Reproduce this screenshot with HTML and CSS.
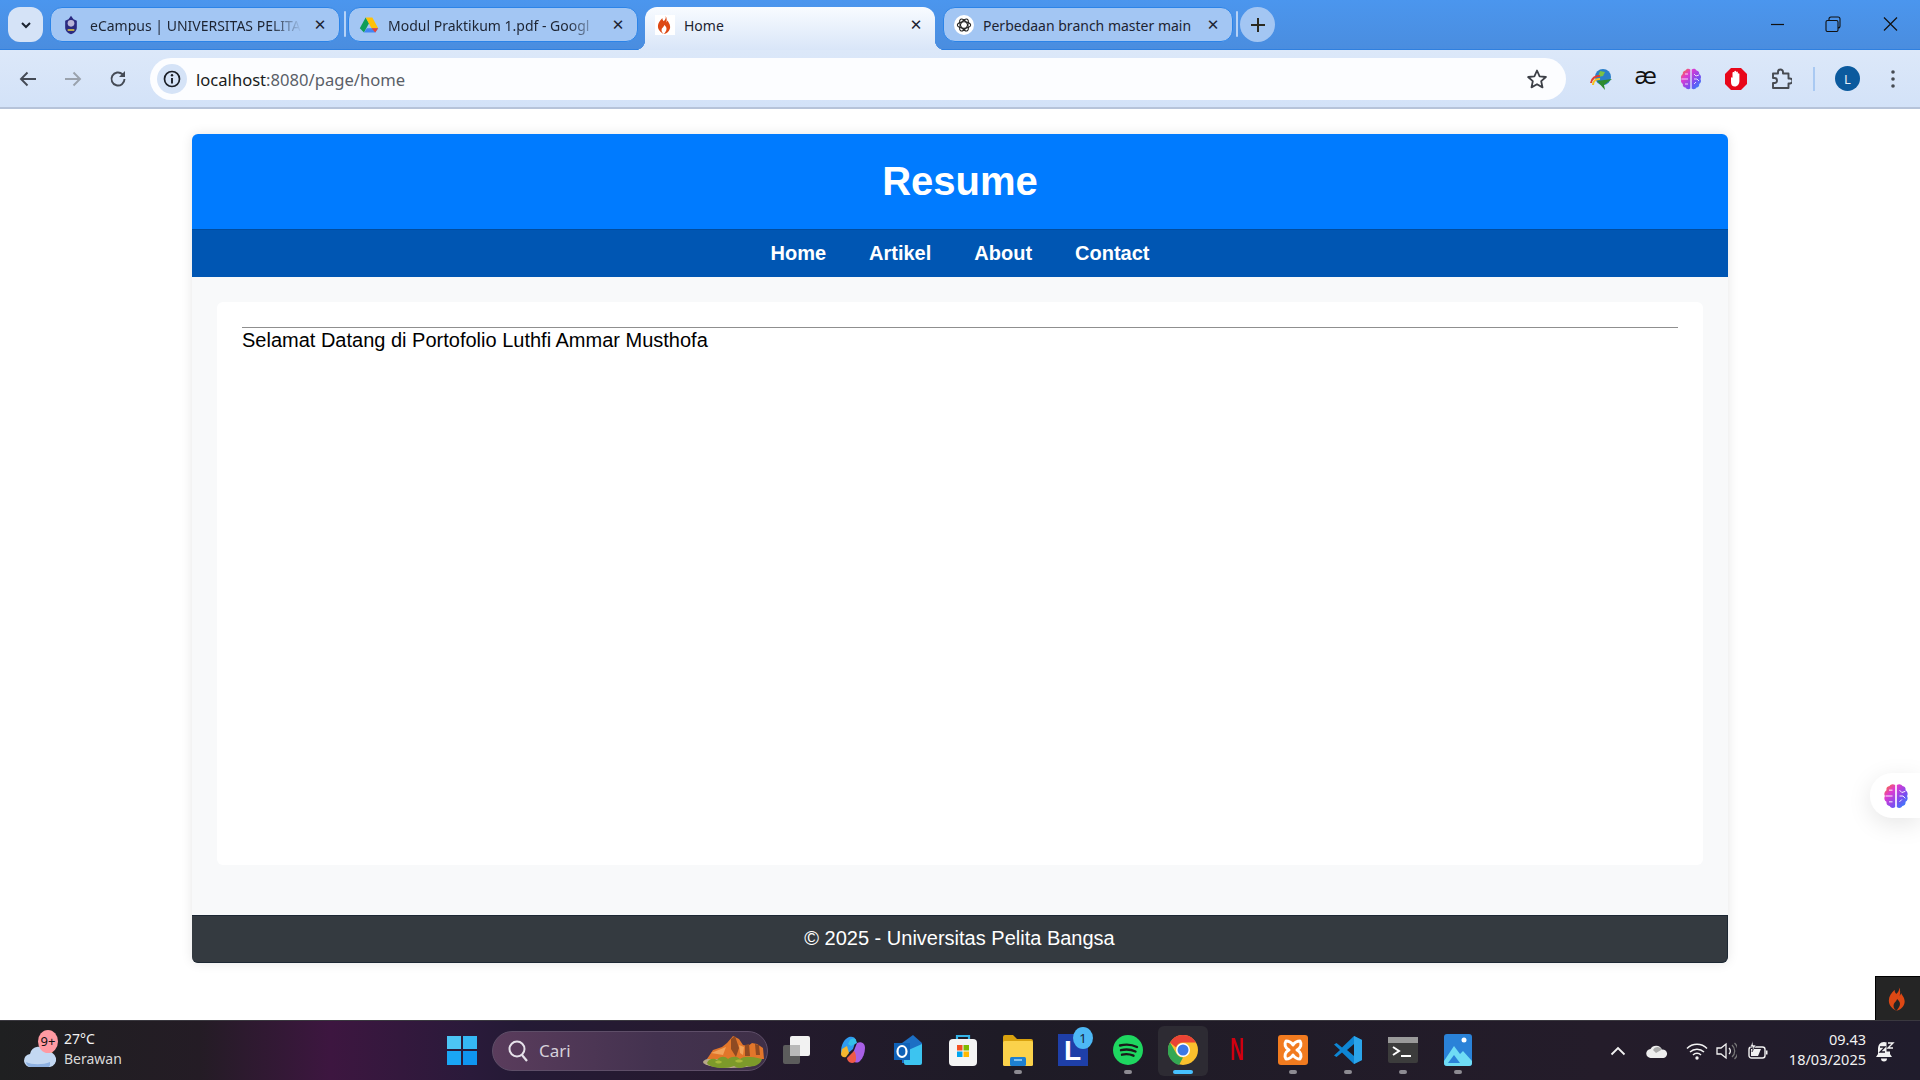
FILE: index.html
```html
<!DOCTYPE html>
<html>

<head>
    <title>Home</title>
    <link rel="stylesheet" href="styles.css">
</head>

<body>
    <svg class="defs" width="0" height="0">
        <defs>
            <linearGradient id="brainGrad" x1="0" y1="0" x2="1" y2="1">
                <stop offset="0" stop-color="#ff7a18" />
                <stop offset="0.3" stop-color="#e03ad0" />
                <stop offset="0.65" stop-color="#7a4df0" />
                <stop offset="1" stop-color="#1e90ff" />
            </linearGradient>
            <symbol id="flame" viewBox="0 0 24 28">
                <path fill="#dd4814" d="M13 0c1 4-1 6-3 8C8 6 8 5 8 3 4 7 1 11 1 16c0 6 5 10 9 12-3-2-4-5-3-8 1-2 3-3 4-6 3 3 4 5 3 8-1 2-2 4-4 6 6-1 10-6 10-11 0-5-3-7-4-10-1 1-1 2-2 3 1-3 1-7-1-10z" />
            </symbol>
            <symbol id="brain" viewBox="0 0 24 24">
                <path fill="url(#brainGrad)" d="M11.300 2.500C9.500 1.300 7.300 1.800 6.500 3.500 4.500 3.700 3.500 5.200 3.800 7 2 8.200 1.500 10.200 2.500 12 1.500 13.800 2 16 3.800 17 3.500 19 4.700 20.500 6.500 20.600 7.500 22.400 9.700 22.800 11.300 21.500zM12.700 2.500C14.500 1.300 16.700 1.800 17.500 3.500 19.500 3.700 20.500 5.200 20.200 7 22 8.200 22.500 10.200 21.500 12 22.500 13.800 22 16 20.200 17 20.500 19 19.300 20.500 17.500 20.600 16.500 22.400 14.300 22.800 12.700 21.500z" />
                <path fill="none" stroke="#fff" stroke-width="0.8" d="M3 12h6M6 7h3M6 17h3M15 7l2 2 3-1M15 12h3l2 2M15 17l2-2" />
            </symbol>
        </defs>
    </svg>

    <div class="tabstrip">
        <div class="tab-list">
            <svg width="14" height="14" viewBox="0 0 14 14"><path d="M3 5l4 4 4-4" fill="none" stroke="#1b2330" stroke-width="2" /></svg>
        </div>
        <div class="tab">
            <svg class="favicon" viewBox="0 0 20 24">
                <path fill="#2b2a80" d="M10 1l3 4 4 2v8c0 4-3 7-7 8-4-1-7-4-7-8V7l4-2z" />
                <circle cx="10" cy="10" r="4" fill="#b9b4d8" />
                <path fill="#d8c24a" d="M6 17h8v2H6z" />
            </svg>
            <span class="tab-title">eCampus | UNIVERSITAS PELITA</span>
            <span class="tab-close">&#10005;</span>
        </div>
        <div class="tab-sep"></div>
        <div class="tab">
            <svg class="favicon" viewBox="0 0 24 22">
                <path fill="#0f9d58" d="M1 15L8 2l4 7-6 11z" />
                <path fill="#ffc107" d="M8 2h8l7 13h-8z" />
                <path fill="#4285f4" d="M6 20l3.500-5H23l-3.500 5z" />
                <path fill="#ea4335" d="M15 15h8l-3.500 5z" />
            </svg>
            <span class="tab-title">Modul Praktikum 1.pdf - Googl</span>
            <span class="tab-close">&#10005;</span>
        </div>
        <div class="tab tab-active">
            <svg class="favicon favicon-white" viewBox="0 0 24 28"><use href="#flame" /></svg>
            <span class="tab-title">Home</span>
            <span class="tab-close">&#10005;</span>
        </div>
        <div class="tab tab-last">
            <svg class="favicon" viewBox="0 0 24 24">
                <circle cx="12" cy="12" r="12" fill="#fff" />
                <g fill="none" stroke="#222" stroke-width="1.300">
                    <ellipse cx="12" cy="12" rx="8" ry="4" />
                    <ellipse cx="12" cy="12" rx="8" ry="4" transform="rotate(60 12 12)" />
                    <ellipse cx="12" cy="12" rx="8" ry="4" transform="rotate(120 12 12)" />
                </g>
            </svg>
            <span class="tab-title">Perbedaan branch master main</span>
            <span class="tab-close">&#10005;</span>
        </div>
        <div class="tab-sep tab-sep-last"></div>
        <div class="new-tab">
            <svg width="16" height="16" viewBox="0 0 16 16"><path d="M8 1v14M1 8h14" stroke="#2b2a20" stroke-width="2" /></svg>
        </div>
        <div class="window-controls">
            <svg width="56" height="16" viewBox="0 0 56 16"><path d="M20 8.500h13" stroke="#111" stroke-width="1.200" /></svg>
            <svg width="56" height="16" viewBox="0 0 56 16"><path transform="translate(-2.500 0)" d="M23 4.500h9a1.500 1.500 0 0 1 1.500 1.500v8a1.500 1.500 0 0 1-1.500 1.500h-9a1.500 1.500 0 0 1-1.500-1.500V6a1.500 1.500 0 0 1 1.500-1.500zM24.500 4V3a2 2 0 0 1 2-2h7a2 2 0 0 1 2 2v7a2 2 0 0 1-2 2" fill="none" stroke="#111" stroke-width="1.100" /></svg>
            <svg width="56" height="16" viewBox="0 0 56 16"><path d="M21 1.500l13 13M34 1.500l-13 13" stroke="#111" stroke-width="1.200" /></svg>
        </div>
    </div>

    <div class="toolbar">
        <div class="tool-btn">
            <svg width="20" height="20" viewBox="0 0 20 20"><path d="M18 10H3M9.500 3.500L3 10l6.500 6.500" fill="none" stroke="#444a55" stroke-width="1.900" /></svg>
        </div>
        <div class="tool-btn">
            <svg width="20" height="20" viewBox="0 0 20 20"><path d="M2 10h15M10.500 3.500L17 10l-6.500 6.500" fill="none" stroke="#9aa2ad" stroke-width="1.900" /></svg>
        </div>
        <div class="tool-btn">
            <svg width="20" height="20" viewBox="0 0 20 20"><path d="M16.500 10a6.500 6.500 0 1 1-2-4.700L16.500 7" fill="none" stroke="#444a55" stroke-width="1.900" /><path d="M17 2v6h-6z" fill="#444a55" /></svg>
        </div>
        <div class="address">
            <div class="site-info">
                <svg width="18" height="18" viewBox="0 0 18 18"><circle cx="9" cy="9" r="7.500" fill="none" stroke="#1b1f27" stroke-width="1.700" /><path d="M9 8v5.500" stroke="#1b1f27" stroke-width="1.900" /><circle cx="9" cy="5.300" r="1.200" fill="#1b1f27" /></svg>
            </div>
            <span class="url"><span class="url-host">localhost</span>:8080/page/home</span>
            <svg class="star" width="22" height="22" viewBox="0 0 22 22"><path d="M11 2.500l2.600 5.800 6.300.7-4.700 4.200 1.300 6.200L11 16.200l-5.500 3.200 1.300-6.200L2.100 9l6.300-.7z" fill="none" stroke="#3d4047" stroke-width="1.800" stroke-linejoin="round" /></svg>
        </div>
        <div class="extensions">
            <div class="tool-btn">
                <svg width="24" height="24" viewBox="0 0 24 24">
                    <circle cx="14" cy="10" r="8" fill="#2a7fc9" />
                    <path fill="#7bc144" d="M11 4l5 1-2 4-5 1z" />
                    <path fill="none" stroke="#e23c2e" stroke-width="2" d="M2 16a8 8 0 0 1 9-7" />
                    <path fill="none" stroke="#f6c21c" stroke-width="2" d="M4 18a6 6 0 0 1 7-6" />
                    <path fill="#2e8b2e" d="M8 14l15-2-8 6 1 5z" />
                </svg>
            </div>
            <div class="tool-btn"><span class="ae-icon">æ</span></div>
            <div class="tool-btn"><svg width="24" height="24"><use href="#brain" /></svg></div>
            <div class="tool-btn">
                <svg width="24" height="24" viewBox="0 0 24 24">
                    <path fill="#e8071a" d="M7 1h10l6 6v10l-6 6H7l-6-6V7z" />
                    <path fill="#fff" d="M7 11c0-1 1.500-1 1.500 0V6c0-1.300 1.800-1.300 1.800 0V4.600c0-1.200 1.800-1.200 1.800 0V5.500c0-1.200 1.800-1.200 1.800 0v1.500c0-1 1.500-1 1.500 0v7c0 3-2 5.500-4.500 5.500S7 18 7 15z" />
                </svg>
            </div>
            <div class="tool-btn">
                <svg width="22" height="22" viewBox="0 0 22 22"><path d="M3 5.500h5V4a2.500 2.500 0 0 1 5 0v1.500h5.500v5H20a2.500 2.500 0 0 1 0 5h-1.500V20H3v-5h1.500a2.500 2.500 0 0 0 0-5H3z" fill="none" stroke="#474b52" stroke-width="1.900" stroke-linejoin="round" /></svg>
            </div>
        </div>
        <div class="tool-sep"></div>
        <div class="tool-btn">
            <div class="avatar">L</div>
        </div>
        <div class="tool-btn">
            <svg width="6" height="20" viewBox="0 0 6 20"><circle cx="3" cy="3" r="1.800" fill="#454a52" /><circle cx="3" cy="10" r="1.800" fill="#454a52" /><circle cx="3" cy="17" r="1.800" fill="#454a52" /></svg>
        </div>
    </div>

    <div class="page">
        <div class="container">
            <header class="site-header">
                <h1>Resume</h1>
            </header>
            <nav class="site-nav">
                <a href="#">Home</a>
                <a href="#">Artikel</a>
                <a href="#">About</a>
                <a href="#">Contact</a>
            </nav>
            <section class="content">
                <div class="card">
                    <hr>
                    <p>Selamat Datang di Portofolio Luthfi Ammar Musthofa</p>
                </div>
            </section>
            <footer class="site-footer">&copy; 2025 - Universitas Pelita Bangsa</footer>
        </div>

        <div class="brain-pill"><svg width="28" height="28"><use href="#brain" /></svg></div>
        <div class="ci-toolbar"><svg width="20" height="24"><use href="#flame" /></svg></div>
    </div>

    <div class="taskbar">
        <div class="weather">
            <div class="weather-icon">
                <svg width="36" height="30" viewBox="0 0 36 30">
                    <circle cx="24" cy="9" r="6" fill="#f08a24" />
                    <path fill="#c3d8f2" d="M8 26a6.500 6.500 0 0 1-1-13 9 9 0 0 1 17-2 7.500 7.500 0 0 1 3 15z" />
                    <path fill="#8fb2e2" d="M3 21c6 3 17 3 24 0a6 6 0 0 1-1 5H8a6 6 0 0 1-5-5z" />
                </svg>
                <span class="weather-badge">9+</span>
            </div>
            <div class="weather-text">
                <span class="weather-temp">27°C</span>
                <span class="weather-desc">Berawan</span>
            </div>
        </div>

        <div class="task-icon">
            <svg width="30" height="30" viewBox="0 0 30 30">
                <path fill="#4cc5f5" d="M0 1h14v13H0z" />
                <path fill="#35b8f5" d="M16 1h14v13H16z" />
                <path fill="#1aa6f5" d="M0 16h14v14H0z" />
                <path fill="#0f95f0" d="M16 16h14v14H16z" />
            </svg>
        </div>
        <div class="search">
            <svg width="22" height="24" viewBox="0 0 22 24"><circle cx="10" cy="10" r="7.500" fill="none" stroke="#e6e2ea" stroke-width="2" /><path d="M15 16l5 6" stroke="#e6e2ea" stroke-width="2.200" /></svg>
            <span class="search-text">Cari</span>
            <svg class="search-art" width="64" height="36" viewBox="0 0 64 36">
                <ellipse cx="30" cy="29" rx="28" ry="6" fill="#b8a888" />
                <path fill="#e2762a" d="M6 26l6-9 9-3 5-4 6-7 6 3 4 6 5 1 4-3 5 1 6 4 1 11z" />
                <path fill="#8f4a22" d="M30 6l4-3 4 12-3 9-5-8zM44 12l4-1 1 12h-5zM54 11l4 1 1 10h-4z" />
                <path fill="#f2a35a" d="M10 20l10-4 5-2-3 8zM38 12l5 2-1 8-3-2z" />
                <path fill="#7d9a2a" d="M6 30c2-5 7-5 10-3 3-4 8-4 11-1 4-3 9-3 12 0 4-3 10-3 22 0-1 5-8 9-15 7-4 2-9 3-13 0-6 3-24 3-27-3z" />
                <path fill="#a8b83a" d="M14 29c2-2 5-2 7 0-2 2-5 2-7 0zM34 28c2-2 6-2 8 0-2 2-6 2-8 0z" />
            </svg>
        </div>

        <div class="task-icon">
            <svg width="32" height="32" viewBox="0 0 32 32">
                <rect x="1" y="11" width="17" height="19" rx="2" fill="#5c5c5c" />
                <rect x="8" y="2" width="20" height="20" rx="2" fill="#f2f2f2" />
                <rect x="8" y="11" width="10" height="11" fill="#b9b9b9" />
            </svg>
        </div>
        <div class="task-icon">
            <svg width="30" height="30" viewBox="0 0 30 30">
                <path fill="#2f9bf0" d="M11 2c3-1 6 0 7 3L15 14l-7 6c-2 2-5 0-5-3 0-7 3-13 8-15z" />
                <path fill="#f5b52e" d="M4 14l5-3 2 7-3 4c-3 1-5-1-5-3z" />
                <path fill="#a860e6" d="M19 8c4-2 8 0 8 5 0 5-2 10-5 13-2 2-5 2-6 0l-1-8z" />
                <path fill="#ef5a48" d="M9 23l7-7c2 2 2 6 2 8 0 3-2 4-4 4-3 0-5-3-5-5z" />
                <path fill="#35c0e8" d="M12 5c2-2 5-2 6 0l1 3-6 3-3-2z" />
            </svg>
        </div>
        <div class="task-icon">
            <svg width="30" height="32" viewBox="0 0 30 32">
                <path fill="#1c6fc4" d="M9 9l11-8 9 8v20H9z" />
                <path fill="#3cc4f0" d="M11 18l18-8v19a2 2 0 0 1-2 2H13a2 2 0 0 1-2-2z" />
                <rect x="1" y="9" width="16" height="17" fill="#0f62b8" />
                <ellipse cx="9" cy="17.500" rx="4.500" ry="5.500" fill="none" stroke="#fff" stroke-width="2.200" />
            </svg>
        </div>
        <div class="task-icon">
            <svg width="30" height="34" viewBox="0 0 30 34">
                <path d="M9 8V3h12v5" fill="none" stroke="#35b4e8" stroke-width="2.200" />
                <rect x="1" y="6" width="28" height="27" rx="4" fill="#f4f4f4" />
                <path fill="#f25022" d="M9 12h5.500v5.500H9z" />
                <path fill="#7fba00" d="M15.500 12H21v5.500h-5.500z" />
                <path fill="#00a4ef" d="M9 18.500h5.500V24H9z" />
                <path fill="#ffb900" d="M15.500 18.500H21V24h-5.500z" />
            </svg>
        </div>
        <div class="task-icon">
            <svg width="30" height="32" viewBox="0 0 30 32">
                <path fill="#d9a20e" d="M0 3a2 2 0 0 1 2-2h8l4 4h14a2 2 0 0 1 2 2v4H0z" />
                <rect y="7" width="30" height="25" rx="1.500" fill="#fbd24b" />
                <rect x="7" y="23" width="16" height="9" rx="1.500" fill="#1d7fd0" />
                <path d="M11 26h8" stroke="#a6d8f8" stroke-width="1.500" />
            </svg>
            <span class="running"></span>
        </div>
        <div class="task-icon">
            <div class="app-l">L</div>
            <span class="app-l-badge">1</span>
        </div>
        <div class="task-icon">
            <svg width="30" height="30" viewBox="0 0 30 30">
                <circle cx="15" cy="15" r="15" fill="#1ed760" />
                <path d="M7 10.500c6-1.500 12-1 17 1.500M8 15.200c5-1.200 10-.8 14.500 1.300M9 19.700c4-1 8-.6 11.500 1" fill="none" stroke="#1a1a1a" stroke-width="2.400" stroke-linecap="round" />
            </svg>
            <span class="running"></span>
        </div>
        <div class="task-icon task-icon-active">
            <svg width="30" height="30" viewBox="0 0 30 30">
                <circle cx="15" cy="15" r="15" fill="#fbc02d" />
                <path fill="#ea4335" d="M2 7.500A15 15 0 0 1 28 7.500H15a7.500 7.500 0 0 0-7 5z" />
                <path fill="#34a853" d="M2 7.500l6.500 11.300a7.500 7.500 0 0 0 6.500 3.700L11 30A15 15 0 0 1 2 7.500z" />
                <circle cx="15" cy="15" r="7" fill="#fff" />
                <circle cx="15" cy="15" r="5.500" fill="#3b78e7" />
            </svg>
            <span class="running running-active"></span>
        </div>
        <div class="task-icon">
            <span class="netflix">N</span>
        </div>
        <div class="task-icon">
            <svg width="30" height="30" viewBox="0 0 30 30">
                <rect width="30" height="30" rx="3" fill="#f27b1f" />
                <path fill="none" stroke="#fff" stroke-width="3" stroke-linejoin="round" d="M8 6c3 0 5 1 7 4 2-3 4-4 7-4 2 3 1 7-3 9 4 2 5 6 3 9-3 0-5-1-7-4-2 3-4 4-7 4-2-3-1-7 3-9-4-2-5-6-3-9z" />
            </svg>
            <span class="running"></span>
        </div>
        <div class="task-icon">
            <svg width="30" height="30" viewBox="0 0 30 30">
                <path fill="#0e86d4" d="M21 1l8 4v20l-8 4-12-11.500L3.500 22 1 20.500 7 15 1 9.500 3.500 8 9 12.500z" />
                <path fill="#2ba5ea" d="M21 1l8 4v20l-8 4z" />
                <path fill="#1e1a24" d="M21 9l-7 6 7 6z" />
            </svg>
            <span class="running"></span>
        </div>
        <div class="task-icon">
            <svg width="30" height="26" viewBox="0 0 30 26">
                <rect width="30" height="26" rx="2" fill="#3c3c3c" />
                <rect width="30" height="6" fill="#9a9a9a" />
                <path d="M5 10l6 4-6 4" fill="none" stroke="#fff" stroke-width="2" />
                <path d="M13 19h10" stroke="#fff" stroke-width="2" />
            </svg>
            <span class="running"></span>
        </div>
        <div class="task-icon">
            <svg width="28" height="32" viewBox="0 0 28 32">
                <rect width="28" height="32" rx="3" fill="#2a82d8" />
                <circle cx="20" cy="6" r="2.500" fill="#fff" />
                <path fill="#6fdcf5" d="M0 27l10-15 6 8 3-3 9 10v2a3 3 0 0 1-3 3H3a3 3 0 0 1-3-3z" />
                <path fill="#2a82d8" d="M4 29l6-8 6 8z" />
            </svg>
            <span class="running"></span>
        </div>

        <div class="tray">
            <svg class="tray-chevron" width="16" height="10" viewBox="0 0 16 10"><path d="M1.500 8.500L8 2l6.500 6.500" fill="none" stroke="#f2f2f2" stroke-width="1.800" /></svg>
            <svg class="tray-cloud" width="22" height="14" viewBox="0 0 22 14"><path fill="#eeeeee" d="M5 14a4.500 4.500 0 0 1-.5-9A6.500 6.500 0 0 1 16 5.500 4.300 4.300 0 0 1 17.500 14z" /><path fill="#a9a9a9" d="M7 6a5 5 0 0 1 9-.5L10 9z" /></svg>
            <svg class="tray-wifi" width="22" height="18" viewBox="0 0 22 18"><path d="M1 6.500a14 14 0 0 1 20 0M4 10a10 10 0 0 1 14 0M7 13a5.500 5.500 0 0 1 8 0" fill="none" stroke="#f2f2f2" stroke-width="1.500" /><circle cx="11" cy="16" r="1.700" fill="#f2f2f2" /></svg>
            <svg class="tray-volume" width="21" height="18" viewBox="0 0 21 18"><path d="M1 6h4l5-4v14l-5-4H1z" fill="none" stroke="#f2f2f2" stroke-width="1.300" /><path d="M13 6a4 4 0 0 1 0 6" fill="none" stroke="#f2f2f2" stroke-width="1.300" /><path d="M16 3a8 8 0 0 1 0 12M18.500 1a11 11 0 0 1 0 16" fill="none" stroke="#777" stroke-width="1.300" /></svg>
            <svg class="tray-battery" width="20" height="20" viewBox="0 0 20 20"><rect x="1" y="6" width="16" height="11" rx="2.500" fill="none" stroke="#f2f2f2" stroke-width="1.400" /><path d="M18 9.500h1.500v4H18z" fill="#f2f2f2" /><path d="M3 8h10l-3 7H3z" fill="#f2f2f2" /><path d="M5 0L2 6h3l-1 5 4-7H5z" fill="#f2f2f2" stroke="#211c2b" stroke-width="0.600" /></svg>
            <div class="clock">
                <span>09.43</span>
                <span>18/03/2025</span>
            </div>
            <svg class="tray-bell" width="20" height="22" viewBox="0 0 20 22">
                <path fill="#f2f2f2" d="M9 2c-4 0-6 3-6 7v5l-2 3h16l-2-3V9c0-4-2-7-6-7z" />
                <path fill="#f2f2f2" d="M6 18.500a3 3 0 0 0 6 0z" />
                <path fill="none" stroke="#211c2b" stroke-width="1.300" d="M5 7h5l-5 5h5" />
                <path fill="none" stroke="#211c2b" stroke-width="3" d="M13 4h6v6h-6z" />
                <path fill="none" stroke="#f2f2f2" stroke-width="1.400" d="M13 3h5l-5 5h5" />
            </svg>
        </div>
    </div>
</body>

</html>
```

FILE: styles.css
```css
html,
body {
    height: 100%;
    overflow: hidden;
}

body {
    margin: 0;
    display: flex;
    flex-direction: column;
    height: 1080px;
    background: #fff;
    font-family: "Noto Sans", "Open Sans", sans-serif;
}

.defs {
    position: absolute;
}

/* tab strip */
.tabstrip {
    height: 50px;
    box-sizing: border-box;
    padding: 7px 0 0 8px;
    display: flex;
    align-items: flex-start;
    flex-shrink: 0;
    background: linear-gradient(to bottom, #4b96ee, #4a8ddf);
    border-bottom: 1px solid #2f80e0;
}

.tab-list {
    width: 35px;
    height: 35px;
    margin-right: 7px;
    border-radius: 12px;
    background: #d5e3f7;
    display: flex;
    justify-content: center;
    align-items: center;
}

.tab {
    width: 290px;
    height: 35px;
    box-sizing: border-box;
    padding: 0 9px 0 10px;
    display: flex;
    align-items: center;
    position: relative;
    border: 1px solid #2c84e8;
    border-radius: 12px;
    background: #a3c6f3;
    color: #1d2432;
    font-size: 14px;
}

.tab-active {
    height: 43px;
    margin-left: 7px;
    padding-bottom: 8px;
    border: none;
    border-radius: 12px 12px 0 0;
    background: linear-gradient(to bottom, #f8fbff, #d9e6f8);
    z-index: 1;
}

.tab-active::before,
.tab-active::after {
    content: "";
    position: absolute;
    bottom: 0;
    width: 10px;
    height: 10px;
}

.tab-active::before {
    left: -10px;
    background: radial-gradient(circle at 0 0, transparent 10px, #d9e6f8 10.5px);
}

.tab-active::after {
    right: -10px;
    background: radial-gradient(circle at 100% 0, transparent 10px, #d9e6f8 10.5px);
}

.tab-last {
    margin-left: 8px;
}

.favicon {
    width: 20px;
    height: 20px;
    flex-shrink: 0;
    margin-right: 9px;
}

.favicon-white {
    background: #fff;
    padding: 1px 2px;
    box-sizing: border-box;
}

.tab-title {
    flex: 1;
    padding-top: 2px;
    white-space: nowrap;
    overflow: hidden;
    -webkit-mask-image: linear-gradient(to right, #000 85%, transparent 100%);
    mask-image: linear-gradient(to right, #000 85%, transparent 100%);
}

.tab-active .tab-title,
.tab-last .tab-title {
    -webkit-mask-image: none;
    mask-image: none;
}

.tab-close {
    width: 20px;
    margin-left: 8px;
    flex-shrink: 0;
    text-align: center;
    font-size: 15px;
    font-weight: bold;
    color: #1d2432;
    font-family: "DejaVu Sans", sans-serif;
}

.tab-sep {
    width: 2px;
    height: 26px;
    margin: 4px 2px 0 4px;
    background: #b5d2f7;
    border-radius: 1px;
}

.tab-sep-last {
    margin: 4px 2px 0 3px;
}

.new-tab {
    width: 35px;
    height: 35px;
    border-radius: 50%;
    background: #a3c6f3;
    display: flex;
    justify-content: center;
    align-items: center;
}

.window-controls {
    margin-left: auto;
    display: flex;
    align-items: center;
    height: 34px;
    padding-right: 1px;
}

/* toolbar */
.toolbar {
    height: 59px;
    box-sizing: border-box;
    padding-left: 5px;
    display: flex;
    align-items: center;
    flex-shrink: 0;
    background: linear-gradient(to bottom, #dce8f9, #d3e2f8);
    border-bottom: 2px solid #b6c3d9;
}

.tool-btn {
    width: 45px;
    height: 42px;
    flex-shrink: 0;
    display: flex;
    justify-content: center;
    align-items: center;
}

.address {
    width: 1416px;
    height: 42px;
    box-sizing: border-box;
    margin-left: 10px;
    padding: 0 18px 0 7px;
    display: flex;
    align-items: center;
    border-radius: 21px;
    background: #fcfdff;
}

.site-info {
    width: 30px;
    height: 30px;
    margin-right: 9px;
    border-radius: 50%;
    background: #d5e3f7;
    display: flex;
    justify-content: center;
    align-items: center;
}

.url {
    flex: 1;
    padding-top: 1px;
    font-size: 16.6px;
    color: #5a5f68;
}

.url-host {
    color: #1a1c20;
}

.extensions {
    margin-left: 12px;
    display: flex;
}

.ae-icon {
    font-family: "DejaVu Sans", sans-serif;
    font-size: 23px;
    color: #111;
    line-height: 1;
    margin-top: -4px;
}

.tool-sep {
    width: 2px;
    height: 24px;
    margin: 0 10px;
    background: #a9c9f2;
}

.avatar {
    width: 25px;
    height: 25px;
    border-radius: 50%;
    background: #0b5a9e;
    color: #e8eef7;
    font-size: 13px;
    display: flex;
    justify-content: center;
    align-items: center;
}

/* page */
.page {
    flex: 1;
    position: relative;
    background: #fff;
}

.container {
    width: 1536px;
    height: 829px;
    margin: 25px auto 0;
    display: flex;
    flex-direction: column;
    background: #f8f9fa;
    border-radius: 6px;
    box-shadow: 0 0 12px rgba(0, 0, 0, 0.1);
    font-family: "Liberation Sans", Arial, sans-serif;
}

.site-header {
    height: 95px;
    display: flex;
    justify-content: center;
    align-items: center;
    flex-shrink: 0;
    background: #007bff;
    border-radius: 6px 6px 0 0;
}

.site-header h1 {
    margin: 0;
    color: #fff;
    font-size: 40px;
    font-weight: bold;
}

.site-nav {
    height: 48px;
    box-sizing: border-box;
    display: flex;
    justify-content: center;
    align-items: center;
    gap: 43px;
    flex-shrink: 0;
    background: #0056b3;
    border-top: 1px solid #004c9f;
}

.site-nav a {
    color: #fff;
    font-size: 20px;
    font-weight: bold;
    text-decoration: none;
}

.content {
    flex: 1;
    padding: 25px;
}

.card {
    height: 563px;
    box-sizing: border-box;
    padding: 25px;
    background: #fff;
    border-radius: 6px;
}

.card hr {
    margin: 0 0 1px;
    border: none;
    border-top: 1px solid #8f8f8f;
}

.card p {
    margin: 0;
    font-size: 20px;
    line-height: 23px;
    color: #000;
}

.site-footer {
    height: 48px;
    box-sizing: border-box;
    padding-bottom: 2px;
    display: flex;
    justify-content: center;
    align-items: center;
    flex-shrink: 0;
    color: #fff;
    font-size: 20px;
    background: #343a40;
    border: 1px solid #1c2733;
    border-left: none;
    border-radius: 0 0 6px 6px;
}

.brain-pill {
    position: absolute;
    right: 0;
    top: 664px;
    width: 50px;
    height: 45px;
    box-sizing: border-box;
    padding-left: 12px;
    display: flex;
    align-items: center;
    background: #fff;
    border-radius: 22px 0 0 22px;
    box-shadow: 0 6px 24px rgba(0, 0, 0, 0.1);
}

.ci-toolbar {
    position: absolute;
    right: 0;
    bottom: 0;
    width: 45px;
    height: 44px;
    box-sizing: border-box;
    display: flex;
    justify-content: center;
    align-items: center;
    background: #252525;
    border-top: 1px solid #000;
    border-left: 1px solid #000;
}

/* taskbar */
.taskbar {
    height: 60px;
    box-sizing: border-box;
    display: flex;
    align-items: center;
    flex-shrink: 0;
    color: #f2f2f2;
    background: linear-gradient(to right, #1f2021 0, #241c25 200px, #3d1640 330px, #2a1a3a 470px, #241a35 520px, #261a30 680px, #1e1b26 1000px, #241c2a 1600px, #201c2c 1920px);
    border-top: 1px solid #3a383f;
}

.weather {
    width: 434px;
    height: 100%;
    box-sizing: border-box;
    padding-left: 23px;
    display: flex;
    align-items: center;
    flex-shrink: 0;
}

.weather-icon {
    width: 41px;
    height: 40px;
    position: relative;
    display: flex;
    align-items: flex-end;
}

.weather-badge {
    position: absolute;
    left: 15px;
    top: -1px;
    width: 20px;
    height: 23px;
    border-radius: 50%;
    background: #ff9aa2;
    color: #111;
    font-size: 13px;
    line-height: 23px;
    text-align: center;
}

.weather-text {
    display: flex;
    flex-direction: column;
    margin-top: -3px;
    font-size: 14px;
    line-height: 20px;
}

.weather-desc {
    color: #d9d9d9;
}

.task-icon {
    width: 55px;
    height: 52px;
    flex-shrink: 0;
    position: relative;
    display: flex;
    justify-content: center;
    align-items: center;
    box-sizing: border-box;
    padding-bottom: 2px;
}

.task-icon-active {
    border-radius: 6px;
    background: #2d2b33;
    width: 50px;
    height: 50px;
    margin: 0 2.5px;
}

.search {
    width: 276px;
    height: 40px;
    box-sizing: border-box;
    margin: 0 2px 0 3px;
    padding: 0 2px 0 14px;
    display: flex;
    align-items: center;
    flex-shrink: 0;
    background: linear-gradient(to right, #5a3c5c, #43324f 60%, #3f3048);
    border: 1px solid #5e4e68;
    border-radius: 20px;
}

.search-text {
    flex: 1;
    margin-left: 10px;
    font-size: 17px;
    color: #d6d0da;
}

.running {
    position: absolute;
    bottom: 3px;
    left: 50%;
    width: 8px;
    height: 4px;
    margin-left: -4px;
    border-radius: 2px;
    background: #8d8b92;
}

.running-active {
    bottom: 2px;
    width: 20px;
    margin-left: -10px;
    background: #47c1ff;
}

.app-l {
    width: 30px;
    height: 32px;
    background: #1e3fa8;
    color: #fff;
    font-family: "Liberation Sans", sans-serif;
    font-size: 28px;
    font-weight: bold;
    line-height: 34px;
    text-align: center;
}

.app-l-badge {
    position: absolute;
    right: 7px;
    top: 2px;
    width: 20px;
    height: 22px;
    border-radius: 50%;
    background: #4db8f5;
    color: #16233a;
    font-size: 13px;
    line-height: 22px;
    text-align: center;
}

.netflix {
    color: #d00010;
    font-family: "Liberation Sans", sans-serif;
    font-size: 32px;
    font-weight: bold;
    display: inline-block;
    transform: scaleX(0.6);
}

.tray {
    margin-left: auto;
    height: 100%;
    display: flex;
    align-items: center;
}

.tray-chevron {
    margin-right: 20px;
}

.tray-cloud {
    margin-right: 18px;
}

.tray-wifi {
    margin-right: 8px;
}

.tray-volume {
    margin-right: 11px;
}

.tray-battery {
    margin-right: 21px;
}

.clock {
    display: flex;
    flex-direction: column;
    align-items: flex-end;
    margin-top: -3px;
    font-size: 14.5px;
    line-height: 20px;
}

.tray-bell {
    margin: 0 25px 0 9px;
}
```
